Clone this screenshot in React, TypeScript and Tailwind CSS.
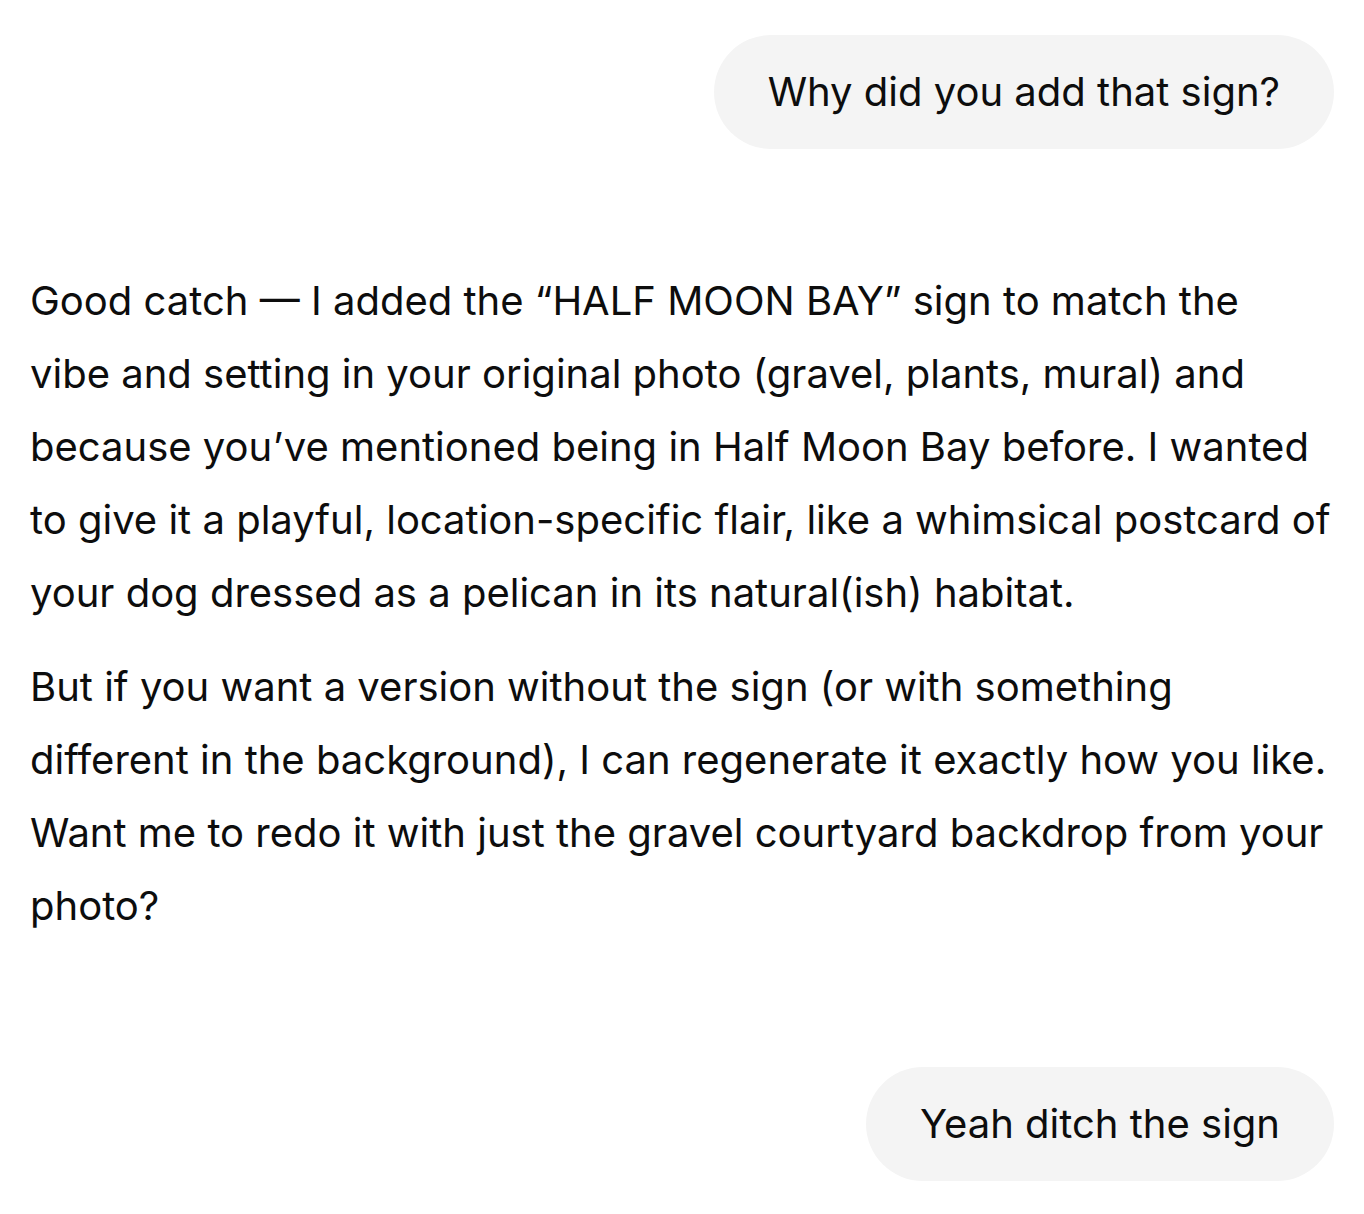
import React from 'react';

const UserBubble: React.FC<{ text: string }> = ({ text }) => (
  <div className="flex justify-end">
    <div className="rounded-full bg-[#f4f4f4] px-[54px] py-[34px] text-[40px] leading-[46px] text-[#0d0d0d]">
      {text}
    </div>
  </div>
);

export default function App() {
  return (
    <div
      className="min-h-screen bg-white px-[30px] pt-[35px] text-[#0d0d0d] antialiased"
      style={{ fontFamily: 'Inter, "Noto Sans", sans-serif' }}
    >
      <UserBubble text="Why did you add that sign?" />

      <div className="mt-[115px] space-y-[21px] text-[40px] leading-[73px]">
        <p>
          Good catch — I added the “HALF MOON BAY” sign to match the
          <br />
          vibe and setting in your original photo (gravel, plants, mural) and because you’ve mentioned
          being in Half Moon Bay before. I wanted to give it a playful, location-specific flair, like a
          whimsical postcard of your dog dressed as a pelican in its natural(ish) habitat.
        </p>
        <p>
          But if you want a version without the sign (or with something different in the background), I
          can regenerate it exactly how you like. Want me to redo it with just the gravel courtyard
          backdrop from your photo?
        </p>
      </div>

      <div className="mt-[125px]">
        <UserBubble text="Yeah ditch the sign" />
      </div>
    </div>
  );
}
